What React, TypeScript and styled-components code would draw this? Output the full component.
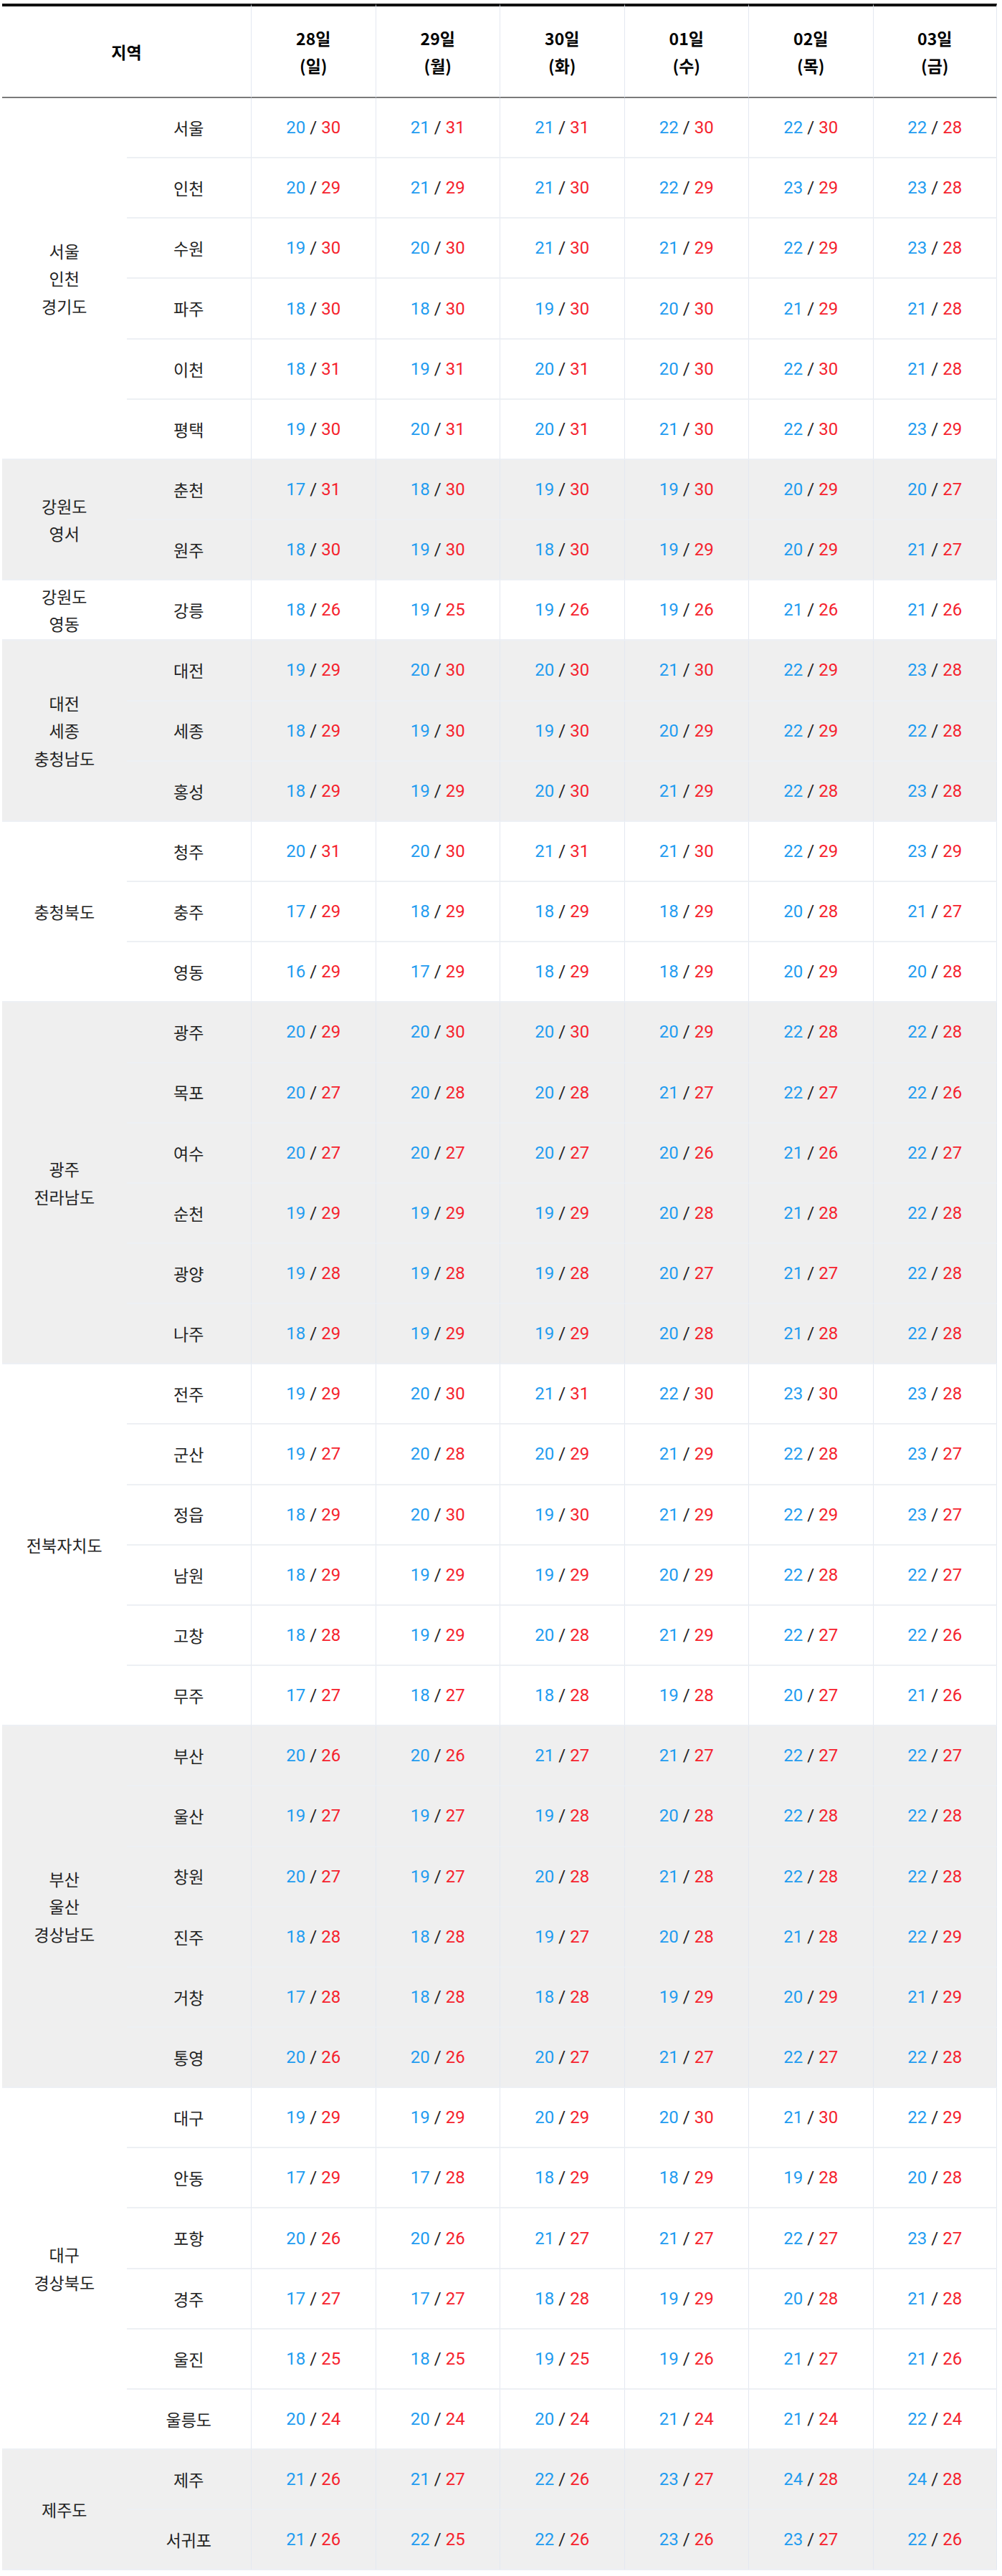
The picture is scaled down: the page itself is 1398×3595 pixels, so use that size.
import React from "react";
import styled, { createGlobalStyle } from "styled-components";

type Row = { name: string; temps: [number, number][] };
type Group = { label: string[]; shaded: boolean; rows: Row[] };

const days = [
    { date: "28일", dow: "(일)" },
    { date: "29일", dow: "(월)" },
    { date: "30일", dow: "(화)" },
    { date: "01일", dow: "(수)" },
    { date: "02일", dow: "(목)" },
    { date: "03일", dow: "(금)" },
];

// "20/30 21/31 ..." -> [[20,30],[21,31],...]
const t = (s: string): [number, number][] =>
    s.split(" ").map((p) => {
        const [lo, hi] = p.split("/");
        return [Number(lo), Number(hi)];
    });

const groups: Group[] = [
    {
        label: ["서울", "인천", "경기도"],
        shaded: false,
        rows: [
            { name: "서울", temps: t("20/30 21/31 21/31 22/30 22/30 22/28") },
            { name: "인천", temps: t("20/29 21/29 21/30 22/29 23/29 23/28") },
            { name: "수원", temps: t("19/30 20/30 21/30 21/29 22/29 23/28") },
            { name: "파주", temps: t("18/30 18/30 19/30 20/30 21/29 21/28") },
            { name: "이천", temps: t("18/31 19/31 20/31 20/30 22/30 21/28") },
            { name: "평택", temps: t("19/30 20/31 20/31 21/30 22/30 23/29") },
        ],
    },
    {
        label: ["강원도", "영서"],
        shaded: true,
        rows: [
            { name: "춘천", temps: t("17/31 18/30 19/30 19/30 20/29 20/27") },
            { name: "원주", temps: t("18/30 19/30 18/30 19/29 20/29 21/27") },
        ],
    },
    {
        label: ["강원도", "영동"],
        shaded: false,
        rows: [{ name: "강릉", temps: t("18/26 19/25 19/26 19/26 21/26 21/26") }],
    },
    {
        label: ["대전", "세종", "충청남도"],
        shaded: true,
        rows: [
            { name: "대전", temps: t("19/29 20/30 20/30 21/30 22/29 23/28") },
            { name: "세종", temps: t("18/29 19/30 19/30 20/29 22/29 22/28") },
            { name: "홍성", temps: t("18/29 19/29 20/30 21/29 22/28 23/28") },
        ],
    },
    {
        label: ["충청북도"],
        shaded: false,
        rows: [
            { name: "청주", temps: t("20/31 20/30 21/31 21/30 22/29 23/29") },
            { name: "충주", temps: t("17/29 18/29 18/29 18/29 20/28 21/27") },
            { name: "영동", temps: t("16/29 17/29 18/29 18/29 20/29 20/28") },
        ],
    },
    {
        label: ["광주", "전라남도"],
        shaded: true,
        rows: [
            { name: "광주", temps: t("20/29 20/30 20/30 20/29 22/28 22/28") },
            { name: "목포", temps: t("20/27 20/28 20/28 21/27 22/27 22/26") },
            { name: "여수", temps: t("20/27 20/27 20/27 20/26 21/26 22/27") },
            { name: "순천", temps: t("19/29 19/29 19/29 20/28 21/28 22/28") },
            { name: "광양", temps: t("19/28 19/28 19/28 20/27 21/27 22/28") },
            { name: "나주", temps: t("18/29 19/29 19/29 20/28 21/28 22/28") },
        ],
    },
    {
        label: ["전북자치도"],
        shaded: false,
        rows: [
            { name: "전주", temps: t("19/29 20/30 21/31 22/30 23/30 23/28") },
            { name: "군산", temps: t("19/27 20/28 20/29 21/29 22/28 23/27") },
            { name: "정읍", temps: t("18/29 20/30 19/30 21/29 22/29 23/27") },
            { name: "남원", temps: t("18/29 19/29 19/29 20/29 22/28 22/27") },
            { name: "고창", temps: t("18/28 19/29 20/28 21/29 22/27 22/26") },
            { name: "무주", temps: t("17/27 18/27 18/28 19/28 20/27 21/26") },
        ],
    },
    {
        label: ["부산", "울산", "경상남도"],
        shaded: true,
        rows: [
            { name: "부산", temps: t("20/26 20/26 21/27 21/27 22/27 22/27") },
            { name: "울산", temps: t("19/27 19/27 19/28 20/28 22/28 22/28") },
            { name: "창원", temps: t("20/27 19/27 20/28 21/28 22/28 22/28") },
            { name: "진주", temps: t("18/28 18/28 19/27 20/28 21/28 22/29") },
            { name: "거창", temps: t("17/28 18/28 18/28 19/29 20/29 21/29") },
            { name: "통영", temps: t("20/26 20/26 20/27 21/27 22/27 22/28") },
        ],
    },
    {
        label: ["대구", "경상북도"],
        shaded: false,
        rows: [
            { name: "대구", temps: t("19/29 19/29 20/29 20/30 21/30 22/29") },
            { name: "안동", temps: t("17/29 17/28 18/29 18/29 19/28 20/28") },
            { name: "포항", temps: t("20/26 20/26 21/27 21/27 22/27 23/27") },
            { name: "경주", temps: t("17/27 17/27 18/28 19/29 20/28 21/28") },
            { name: "울진", temps: t("18/25 18/25 19/25 19/26 21/27 21/26") },
            { name: "울릉도", temps: t("20/24 20/24 20/24 21/24 21/24 22/24") },
        ],
    },
    {
        label: ["제주도"],
        shaded: true,
        rows: [
            { name: "제주", temps: t("21/26 21/27 22/26 23/27 24/28 24/28") },
            { name: "서귀포", temps: t("21/26 22/25 22/26 23/26 23/27 22/26") },
        ],
    },
];

const GlobalStyle = createGlobalStyle`
  body {
    margin: 0;
    background: #fff;
    font-family: "Noto Sans CJK KR", "Noto Sans", sans-serif;
    color: #222;
  }
`;

const Page = styled.div`
  padding: 5px 0 7px 3px;
`;

const Table = styled.table`
  width: 1388px;
  table-layout: fixed;
  border-collapse: separate;
  border-spacing: 0;
  font-size: 23px;
  line-height: 1.67;
`;

const HeadCell = styled.th<{ $day?: boolean }>`
  height: 126px;
  padding: 0;
  border-top: 4px solid #111;
  border-bottom: 2px solid #7a7a7a;
  border-left: ${(p) => (p.$day ? "1px solid #e3e8f1" : "none")};
  font-weight: 700;
  color: #000;
  text-align: center;
  vertical-align: middle;

  &:last-child {
    border-right: 1px solid #e3e8f1;
  }
`;

const BodyRow = styled.tr<{ $shaded: boolean }>`
  background: ${(p) => (p.$shaded ? "#efefef" : "#fff")};
`;

const GroupCell = styled.td`
  padding: 0;
  border-bottom: 2px solid #edf0f4;
  text-align: center;
  vertical-align: middle;
  color: #222;
`;

const NameCell = styled.td`
  height: 82.17px;
  padding: 0;
  border-bottom: 2px solid #edf0f4;
  text-align: center;
  vertical-align: middle;
  color: #222;
`;

const TempCell = styled.td`
  padding: 0;
  border-bottom: 2px solid #edf0f4;
  border-left: 1px solid #e3e8f1;
  font-family: Roboto, "Noto Sans CJK KR", sans-serif;
  font-size: 24px;
  text-align: center;
  vertical-align: middle;
  color: #222;
  white-space: nowrap;

  &:last-child {
    border-right: 1px solid #e3e8f1;
  }
`;

const Low = styled.span`
  color: #1f9cf0;
`;

const High = styled.span`
  color: #f5222d;
`;

const App: React.FC = () => {
    return (
        <Page>
            <GlobalStyle />
            <Table>
                <thead>
                    <tr>
                        <HeadCell colSpan={2}>지역</HeadCell>
                        {days.map((d) => (
                            <HeadCell key={d.date} $day>
                                {d.date}
                                <br />
                                {d.dow}
                            </HeadCell>
                        ))}
                    </tr>
                </thead>
                <tbody>
                    {groups.map((g) =>
                        g.rows.map((r, i) => (
                            <BodyRow key={g.label.join("") + r.name} $shaded={g.shaded}>
                                {i === 0 && (
                                    <GroupCell rowSpan={g.rows.length}>
                                        {g.label.map((l, j) => (
                                            <React.Fragment key={l}>
                                                {j > 0 && <br />}
                                                {l}
                                            </React.Fragment>
                                        ))}
                                    </GroupCell>
                                )}
                                <NameCell>{r.name}</NameCell>
                                {r.temps.map(([lo, hi], k) => (
                                    <TempCell key={k}>
                                        <Low>{lo}</Low> / <High>{hi}</High>
                                    </TempCell>
                                ))}
                            </BodyRow>
                        ))
                    )}
                </tbody>
            </Table>
        </Page>
    );
};

export default App;
